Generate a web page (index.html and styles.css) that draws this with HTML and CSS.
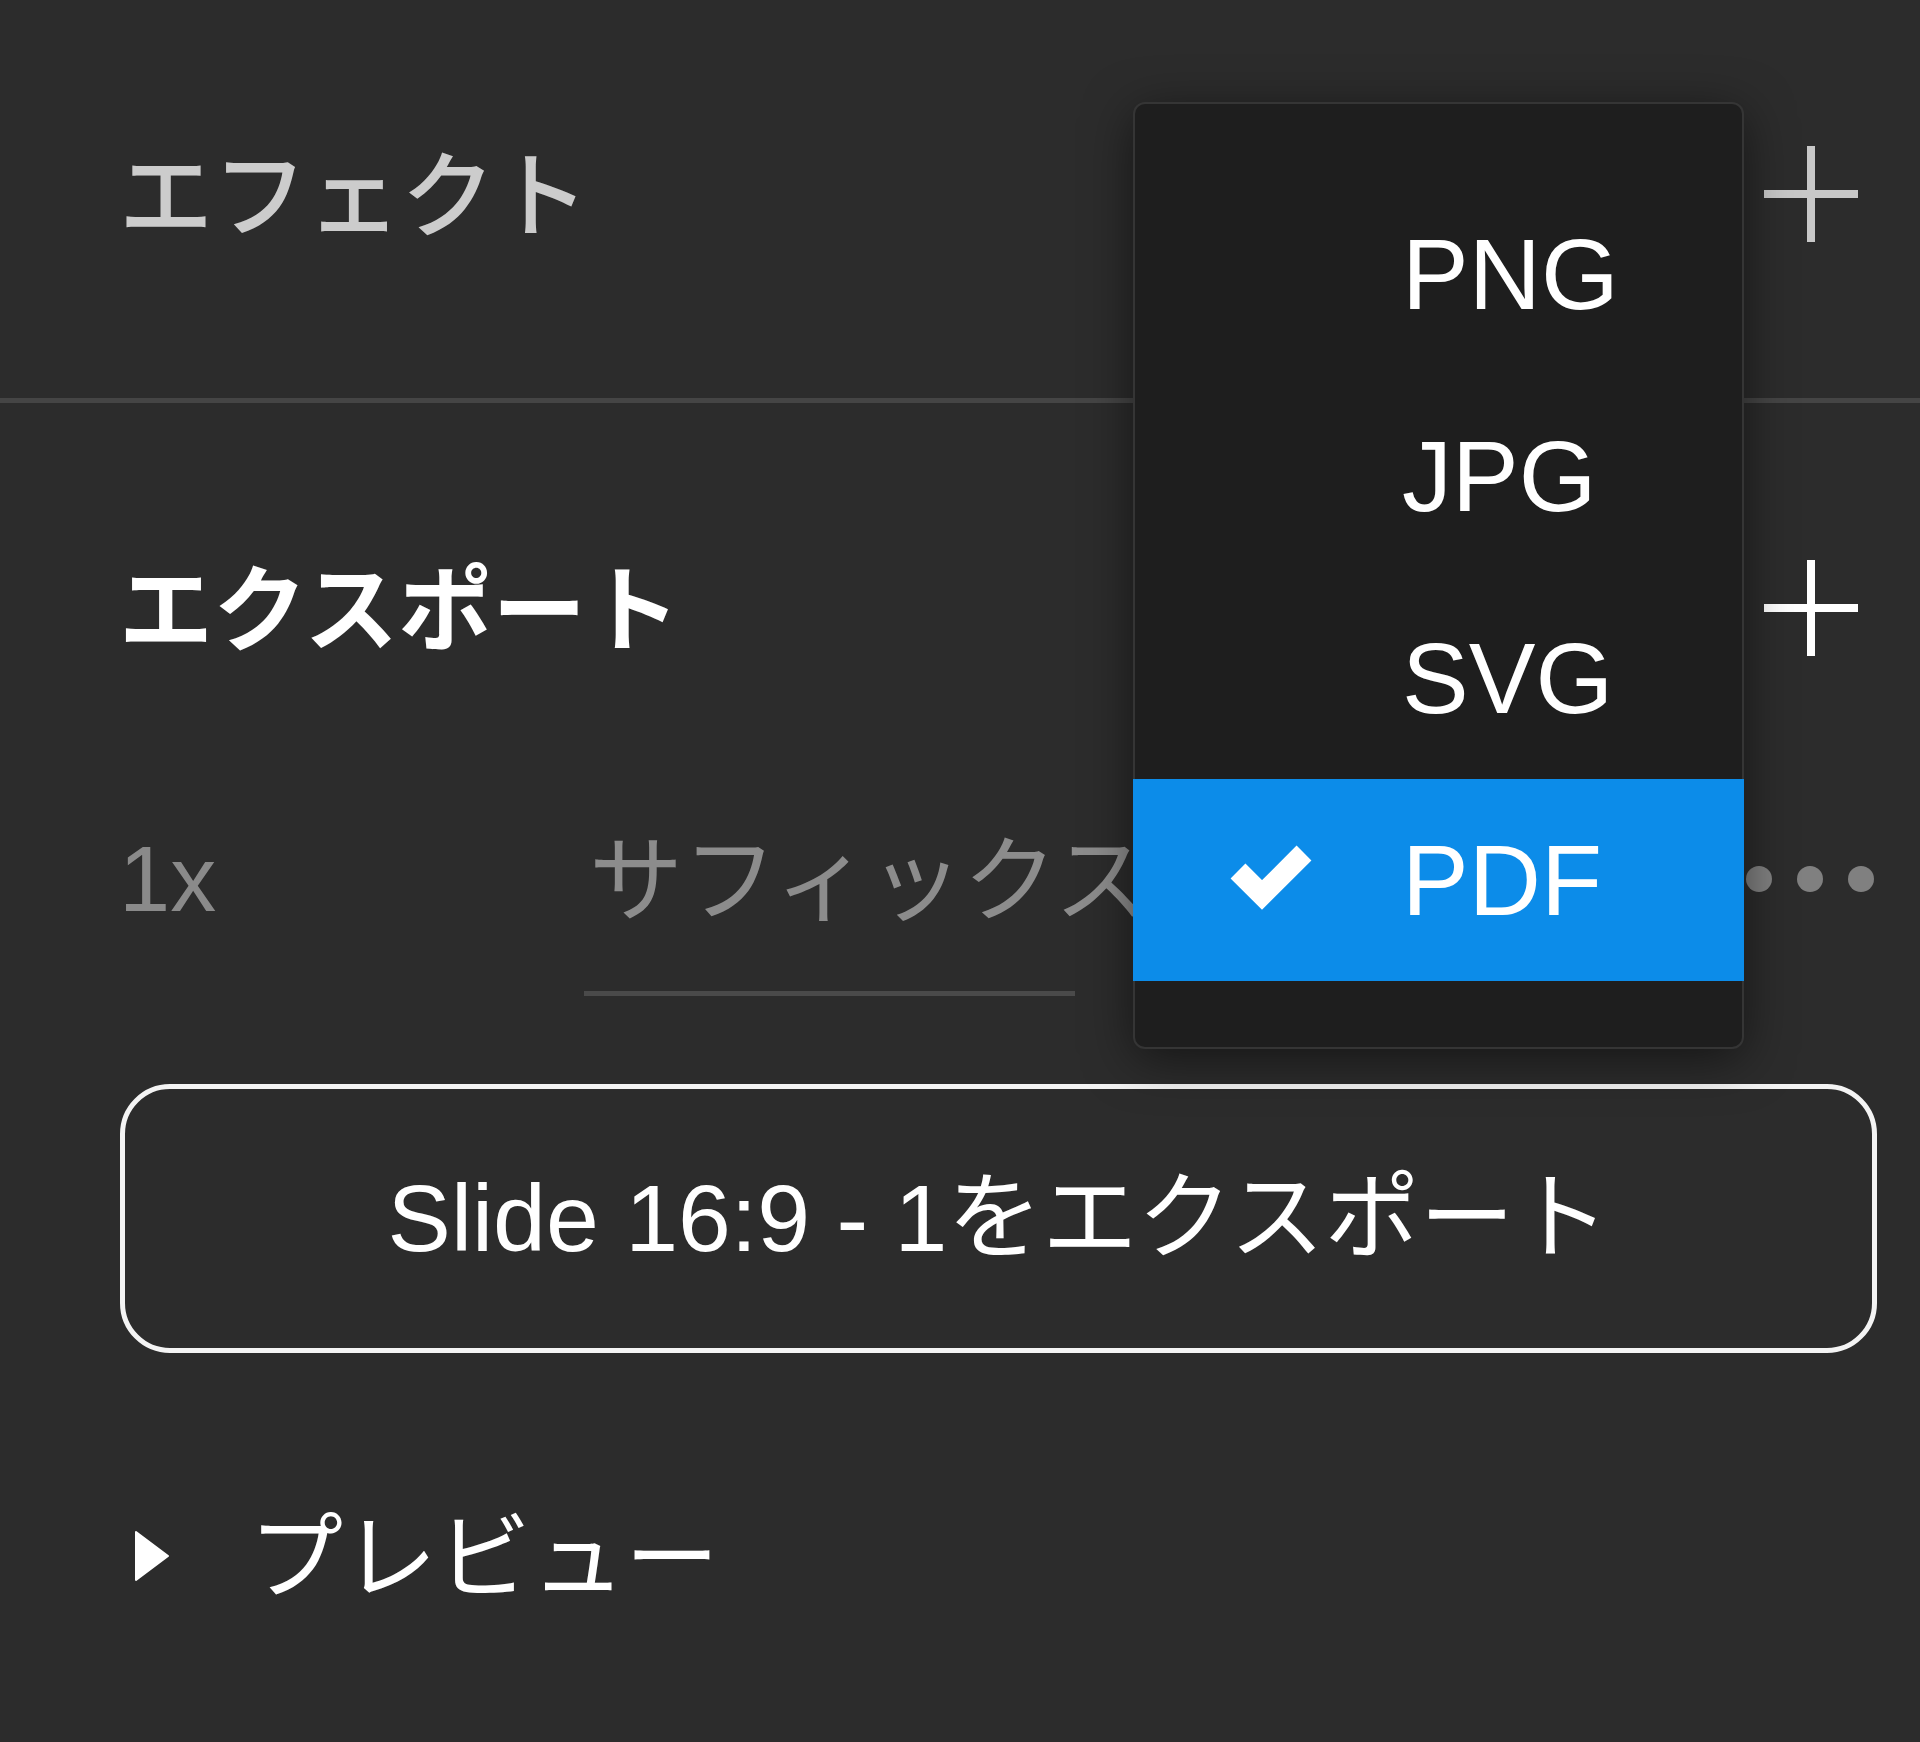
FILE: index.html
```html
<!DOCTYPE html>
<html lang="ja">
<head>
<meta charset="utf-8">
<title>Export panel</title>
<link rel="stylesheet" href="styles.css">
</head>
<body>
<div class="panel">
  <section class="sec sec-effects">
    <div class="sec-head">
      <span class="sec-title dim">エフェクト</span>
      <svg class="plus dim-stroke" viewBox="0 0 96 96" width="96" height="96"><path d="M47 0V96M0 48H94"/></svg>
    </div>
  </section>
  <section class="sec sec-export">
    <div class="sec-head">
      <span class="sec-title strong">エクスポート</span>
      <svg class="plus white-stroke" viewBox="0 0 96 96" width="96" height="96"><path d="M47 0V96M0 48H94"/></svg>
    </div>
    <div class="export-row">
      <span class="scale">1x</span>
      <div class="suffix"><span class="suffix-text">サフィックス</span></div>
      <div class="more"><i></i><i></i><i></i></div>
    </div>
    <button class="export-btn">Slide 16:9 - 1をエクスポート</button>
    <div class="preview">
      <svg class="tri" viewBox="0 0 34 52" width="34" height="52"><path d="M1 2 L33 26 L1 50 Z"/></svg>
      <span class="preview-text">プレビュー</span>
    </div>
  </section>
</div>

<div class="menu">
  <div class="menu-item">PNG</div>
  <div class="menu-item">JPG</div>
  <div class="menu-item">SVG</div>
  <div class="menu-item selected">
    <svg class="check" viewBox="0 0 92 70" width="92" height="70"><path d="M12 30 L36 54 L78 12"/></svg>
    PDF
  </div>
</div>
</body>
</html>
```

FILE: styles.css
```css
html, body {
  margin: 0;
  padding: 0;
}

body {
  background: #2c2c2c;
  width: 1920px;
  height: 1742px;
  overflow: hidden;
  font-family: "Liberation Sans", "Noto Sans CJK JP", sans-serif;
  color: #ffffff;
  position: relative;
}

.sec {
  padding: 0 43px 0 119px;
}

.sec-effects {
  height: 403px;
  box-sizing: border-box;
  padding-top: 146px;
  border-bottom: 5px solid #454545;
}

.sec-head {
  display: flex;
  align-items: center;
  justify-content: space-between;
  height: 96px;
}

.sec-title {
  font-family: "Noto Sans CJK JP", sans-serif;
  font-size: 94px;
  line-height: 96px;
  white-space: nowrap;
  margin-bottom: 10px;
}

.sec-title.dim {
  color: #cccccc;
  font-weight: 500;
}

.sec-title.strong {
  color: #ffffff;
  font-weight: 700;
}

.plus {
  margin-right: 17px;
  fill: none;
  stroke-width: 8;
}

.dim-stroke { stroke: #c8c8c8; }
.white-stroke { stroke: #ffffff; }

.sec-export {
  padding-top: 157px;
}

.export-row {
  display: flex;
  align-items: flex-start;
  margin-top: 175px;
  height: 165px;
}

.scale {
  width: 465px;
  font-size: 92px;
  line-height: 96px;
  color: #8a8a8a;
}

.suffix {
  width: 491px;
  height: 160px;
  border-bottom: 5px solid #4a4a4a;
}

.suffix-text {
  display: block;
  padding-left: 5px;
  margin-top: -6px;
  font-family: "Noto Sans CJK JP", sans-serif;
  font-size: 94px;
  line-height: 96px;
  color: #8c8c8c;
  white-space: nowrap;
}

.more {
  margin-left: auto;
  margin-right: 3px;
  height: 96px;
  display: flex;
  align-items: center;
  gap: 25px;
}

.more i {
  display: block;
  width: 26px;
  height: 26px;
  border-radius: 50%;
  background: #808080;
}

.export-btn {
  display: block;
  box-sizing: border-box;
  width: 1757px;
  height: 269px;
  margin: 88px 0 0 1px;
  border: 5px solid #f4f4f4;
  border-radius: 50px;
  background: transparent;
  color: #ffffff;
  font-family: "Liberation Sans", "Noto Sans CJK JP", sans-serif;
  font-size: 95px;
  line-height: 1;
  padding: 0;
}

.preview {
  display: flex;
  align-items: center;
  height: 96px;
  margin-top: 155px;
}

.tri {
  margin-left: 16px;
  fill: #ffffff;
  stroke: #ffffff;
  stroke-width: 2;
  stroke-linejoin: round;
}

.preview-text {
  margin-left: 80px;
  margin-bottom: 12px;
  font-family: "Noto Sans CJK JP", sans-serif;
  font-size: 94px;
  line-height: 96px;
  color: #ffffff;
}

.menu {
  position: absolute;
  left: 1135px;
  top: 104px;
  width: 607px;
  box-sizing: border-box;
  padding: 69px 0 66px;
  background: #1e1e1e;
  border-radius: 10px;
  box-shadow: 0 0 0 2px #353535, 0 10px 50px rgba(0, 0, 0, 0.55);
}

.menu-item {
  position: relative;
  height: 202px;
  line-height: 202px;
  padding-left: 267px;
  font-family: "Liberation Sans", sans-serif;
  font-size: 100px;
  color: #ffffff;
}

.menu-item.selected {
  background: #0c8ce9;
  margin: 0 -2px;
  padding-left: 269px;
}

.check {
  position: absolute;
  left: 93px;
  top: 62px;
  fill: none;
  stroke: #ffffff;
  stroke-width: 21;
  stroke-linecap: butt;
  stroke-linejoin: miter;
}
```
